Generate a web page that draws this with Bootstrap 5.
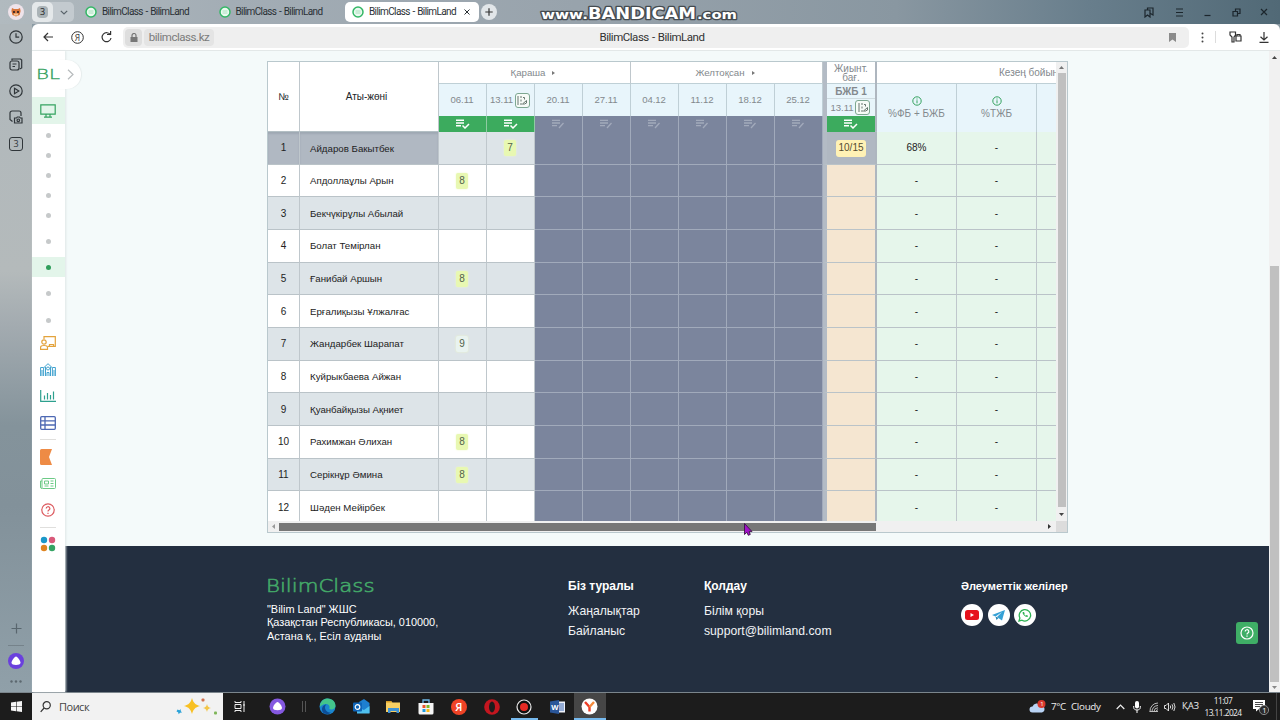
<!DOCTYPE html>
<html lang="kk">

<head>
  <meta charset="UTF-8">
  <meta name="viewport" content="width=device-width, initial-scale=1.0">
  <title>BilimClass - BilimLand</title>
  <link href="https://cdn.jsdelivr.net/npm/bootstrap@5.3.0/dist/css/bootstrap.min.css" rel="stylesheet">
  <style>
    body {
      width: 1280px;
      height: 720px;
      overflow: hidden;
      font-family: "Liberation Sans", Arial, sans-serif;
      font-size: 10px;
      line-height: 1.2;
      color: #222;
      background: #8c9ba4;
    }
    svg { display: block; flex: none; }
    svg.ln { fill: none; stroke: currentColor; stroke-width: 1.2; }
    .ui-font { font-family: "Open Sans", "Noto Sans", sans-serif; }

    /* Browser */
    .tab-strip { height: 24px; background: linear-gradient(90deg, #b1babf 0, #a3adb5 18%, #98a3ac 45%, #8997a1 70%, #687e8c 85%, #516976 100%); }
    .tab-item { height: 20px; color: #2a3035; white-space: nowrap; }
    .tab-txt { font-family: Roboto, sans-serif; font-size: 10px; letter-spacing: -.62px; word-spacing: .8px; }
    .tab-on { background: #fff; border-radius: 5px; width: 134px; }
    .pin-group { background: #c3cacf; border-radius: 5px; height: 20px; width: 42px; }
    .pin-on { width: 21px; height: 20px; background: #e4e8ea; border-radius: 5px; }
    .pin-num { background: #aab3b7; border-radius: 4px; width: 11px; height: 12px; font-size: 9px; }
    .plus-btn { width: 16px; height: 16px; border-radius: 50%; background: #e2e6e9; }
    .rail { width: 32px; height: 669px; color: #30363a; background: linear-gradient(180deg, #b0b8bc 0, #b4babb 37%, #a3abb0 45%, #84939b 60%, #82919a 72%, #90a0a9 100%); }
    .rail-item { height: 26.7px; }
    .rail-box { width: 14px; height: 14px; border: 1.2px solid #30363a; border-radius: 3px; font-size: 9px; }
    .viewer { width: 1248px; }
    .toolbar { height: 27px; background: #fff; border-radius: 6px 6px 0 0; border-bottom: 1px solid #e3e8e8; color: #333; }
    .address { width: 1066px; height: 21px; background: #efefef; border-radius: 5px; }
    .addr-chip { background: #dedede; border-radius: 4px; height: 17px; }
    .addr-host { width: 70px; margin-left: 2px; padding-top: 1px; background: #e4e4e4; color: #7a7a7a; font-family: Roboto, sans-serif; font-size: 11.5px; letter-spacing: -.45px; }
    .addr-title { width: 240px; margin-left: 318px; padding-top: 1px; color: #333; font-family: Roboto, sans-serif; font-size: 11.5px; letter-spacing: -.48px; word-spacing: .8px; }

    /* BilimClass sidebar */
    .side { width: 33px; padding-right: 1px; background: #fff; box-shadow: 1px 0 2px #dfe6e6; z-index: 2; }
    .side-on { background: #e3f5ea; margin-right: -1px; padding-right: 1px; }
    .dotty { width: 5px; height: 5px; border-radius: 50%; background: #c6c9ca; }
    .side-on .dotty { background: #2f9e5b; }
    .side-line { height: 1px; background: #e0dfdd; margin: 0 8px; }
    .bump { position: absolute; left: 26px; top: 9px; width: 23px; height: 29px; background: #fff; border-radius: 0 15px 15px 0; box-shadow: 1px 0 1px #e6ecec; }
    .page-bg { width: 1204px; background: #f4fafa; }
    .scroll-col { width: 11px; background: #f1f1f1; }

    /* Journal */
    .journal { width: 801px; height: 472px; margin: 10px 0 0 202px; border: 1px solid #b9c8cd; background: #f0f0f0; }
    .grid-view { width: 788px; height: 459px; overflow: hidden; background: #fff; }
    .grid-in { width: 869px; }
    .g-head { height: 70px; border-bottom: 1px solid #b3bfc4; color: #83898d; }
    .g-row { height: 32.67px; }
    .cell { border-right: 1px solid #bfc7cc; border-bottom: 1px solid #bac3c8; display: flex; align-items: center; justify-content: center; flex: none; }
    .g-row .cell { padding-top: 1px; }
    .g-head .cell { border-bottom: 0; }
    .c-no { width: 32px; }
    .c-name { width: 139px; }
    .g-row .c-name { justify-content: flex-start; padding-left: 10px; font-size: 9.7px; }
    .day-txt { font-size: 9.6px; letter-spacing: -.1px; padding-right: 1px; }
    .c-day { width: 48px; }
    .g-row .c-day { padding-right: 1px; }
    .c-sum { width: 54px; border-left: 4px solid #b3bbc5; border-right: 2px solid #aeb6bf; background: #f5e6d1; }
    .c-pct { width: 80px; background: #e6f6eb; }
    .g-row:nth-child(even) .c-no, .g-row:nth-child(even) .c-name, .g-row:nth-child(even) .c-day { background: #dde4e8; }
    .g-row:nth-child(2) .c-no, .g-row:nth-child(2) .c-name { background: #b0b8c2; box-shadow: inset 0 2px 2px #9fa8b3; }
    .g-row:nth-child(2) .c-sum { background: #b0b8c2; }
    .g-row .c-day.c-off, .g-head .c-off { background: #7b859d; border-color: #a1aabb; }
    .h-month { height: 22px; border-bottom: 1px solid #bfd0d6; border-right: 1px solid #bfc7cc; background: #fff; }
    .h-sum { padding-top: 2px; line-height: 9px; }
    .h-date { height: 32px; background: #e8f5fb; border-right: 1px solid #bfcfd6; }
    .h-mark { height: 16px; background: #3cab5e; color: #fff; border-right: 1px solid #8fcba2; }
    .h-mark.c-off { color: #a2aabb; }
    .edit-box { width: 15px; height: 15px; border: 1px solid #7da791; border-radius: 3px; background: #f6fbf7; color: #66756e; }
    .mark-chip { background: #e8f8b2; padding: 2px 3px; box-shadow: 0 0 2px #eefac4; color: #52624a; border-radius: 2px; }
    .mark-chip.nine { background: #e9f3f0; }
    .sum-chip { background: #fff2b5; border-radius: 3px; width: 30px; height: 17px; color: #554b30; }
    .v-scroll { width: 11px; height: 459px; background: #f0f0f0; }
    .thumb-v { background: #c0c0c0; }
    .thumb-h { width: 597px; height: 8px; background: #777; }
    .pointer { position: absolute; left: 743px; top: 522px; z-index: 5; }

    /* Footer */
    .site-foot { height: 146px; background: #232f40; color: #fff; padding: 30px 0 0 202px; }
    .foot-h { font-size: 12px; font-weight: 700; height: 24px; }
    .foot-a { font-size: 12.2px; height: 20px; padding-top: .5px; color: #f1f3f5; }
    .foot-addr { font-size: 10.9px; line-height: 13.4px; }
    .soc { width: 22px; height: 22px; border-radius: 50%; background: #fff; }
    .help-btn { position: absolute; right: 11px; bottom: 48px; width: 22px; height: 22px; background: #3fae66; border-radius: 3px; }

    /* Taskbar */
    .taskbar { height: 28px; background: #1c1c1c; border-top: 1px solid #7b858c; color: #eee; }
    .search { width: 191px; background: #f2f2f2; color: #444; font-size: 11px; }
    .app { width: 32.7px; height: 27px; display: flex; align-items: center; justify-content: center; }
    .app-run { box-shadow: inset 0 -2px 0 #76b9ed; width: 27px; margin: 0 2.85px; }
    .app-on { background: #464646; box-shadow: inset 0 -2px 0 #76b9ed; }
    .tray { font-size: 9.8px; }
  </style>
</head>

<body class="d-flex flex-column">

  <!-- Tabs -->
  <div class="tab-strip d-flex align-items-center ui-font">
    <svg class="ms-2" width="16" height="16" viewBox="0 0 16 16"><circle cx="8" cy="8" r="8" fill="#efe3ea"/><path d="M4 4l2 1h4l2-1 .6 3-1 4L8 12.500l-3.600-1.500-1-4z" fill="#d8763c"/><path d="M5 7h2v2H5zM9 7h2v2H9z" fill="#4b2f28"/><path d="M6 9.500h4v2H6z" fill="#f3c89a"/></svg>
    <div class="pin-group d-flex align-items-center" style="margin-left:8px">
      <div class="pin-on d-flex align-items-center justify-content-center"><span class="pin-num d-flex align-items-center justify-content-center">3</span></div>
      <svg class="ln ms-auto me-auto" width="8" height="5" viewBox="0 0 8 5" color="#59636a"><path d="M.8.8L4 4 7.200.8"/></svg>
    </div>
    <div id="tabs" class="d-flex align-items-center"></div>
    <div class="plus-btn d-flex align-items-center justify-content-center" style="margin-left:2px"><svg class="ln" width="8" height="8" viewBox="0 0 8 8" color="#333"><path d="M4 .3v7.400M.3 4h7.400"/></svg></div>
    <svg style="margin-left:42px" width="203" height="22" viewBox="0 0 203 22">
      <g font-family="DejaVu Sans" font-weight="700" fill="#fff" stroke="#444b50" stroke-width="2.600" stroke-linejoin="round" paint-order="stroke">
        <text x="2" y="18" font-size="13" textLength="47" lengthAdjust="spacingAndGlyphs">www.</text>
        <text x="49" y="18" font-size="15" textLength="108" lengthAdjust="spacingAndGlyphs">BANDICAM</text>
        <text x="158" y="18" font-size="13" textLength="40" lengthAdjust="spacingAndGlyphs">.com</text>
      </g>
    </svg>
    <div class="d-flex align-items-center ms-auto" style="gap:19.500px;margin-right:12px;color:#1c262d">
      <svg class="ln" style="margin-right:1px" width="10" height="11" viewBox="0 0 10 11"><path d="M1 3h5v7L3.500 8 1 10zM3.500 3V1H9v7L6.500 6.500"/></svg>
      <svg class="ln" width="9" height="9" viewBox="0 0 9 9"><path d="M1 1h7M1 4.500h7M1 8h7"/></svg>
      <svg class="ln" width="9" height="9" viewBox="0 0 9 9"><path d="M1.500 7.500h6"/></svg>
      <svg class="ln" width="9" height="9" viewBox="0 0 9 9"><path d="M1 3.500h4.500V8H1zM3.500 3.500V1H8v4.500H5.500"/></svg>
      <svg class="ln" width="8" height="8" viewBox="0 0 8 8"><path d="M1 1l6 6M7 1L1 7"/></svg>
    </div>
  </div>

  <div class="d-flex" style="height:668px">
    <!-- Browser rail -->
    <div class="rail d-flex flex-column">
      <div id="railTop"></div>
      <div class="mt-auto d-flex flex-column align-items-center" style="padding-bottom:10px">
        <svg class="ln" width="11" height="11" viewBox="0 0 11 11" color="#59666e"><path d="M5.500.5v10M.5 5.500h10"/></svg>
        <div style="width:16px;height:1px;background:#75828a;margin:11px 0 7px"></div>
        <svg width="16" height="16" viewBox="0 0 16 16"><circle cx="8" cy="8" r="8" fill="#6a40dd"/><path d="M8 3.500c1.500 0 4.500 4.500 4.500 6.300 0 1.700-2 2.200-4.500 2.200s-4.500-.5-4.500-2.200C3.500 8 6.500 3.500 8 3.500z" fill="#fff"/></svg>
        <svg style="margin-top:11px" width="12" height="3" viewBox="0 0 12 3" fill="#5c686f"><circle cx="1.500" cy="1.500" r="1.200"/><circle cx="6" cy="1.500" r="1.200"/><circle cx="10.500" cy="1.500" r="1.200"/></svg>
      </div>
    </div>

    <div class="viewer d-flex flex-column">
      <!-- Toolbar -->
      <div class="toolbar d-flex align-items-center ui-font">
        <svg class="ln" style="margin-left:11px" width="10" height="10" viewBox="0 0 10 10"><path d="M10 5H1M5 1L1 5l4 4"/></svg>
        <svg style="margin-left:18px" width="13" height="13" viewBox="0 0 13 13"><circle cx="6.500" cy="6.500" r="5.800" fill="none" stroke="#333"/><text x="3.700" y="9.500" font-size="8.500" font-family="Open Sans" fill="#333">Я</text></svg>
        <svg class="ln" style="margin-left:17px" width="11" height="12" viewBox="0 0 11 12"><path d="M9.500 4A4.500 4.500 0 1 0 10 7M6 3.500h3.600V0"/></svg>
        <div class="address d-flex align-items-center" style="margin-left:11px">
          <div class="addr-chip d-flex align-items-center justify-content-center" style="width:17px;margin-left:2px"><svg width="8" height="9" viewBox="0 0 8 9"><path d="M.5 4h7v5h-7z" fill="#777"/><path d="M2 4V2.500a2 2 0 0 1 4 0V4" fill="none" stroke="#777" stroke-width="1.200"/></svg></div>
          <div class="addr-chip addr-host d-flex align-items-center justify-content-center">bilimclass.kz</div>
          <div class="addr-title text-center">BilimClass - BilimLand</div>
          <svg class="ms-auto" style="margin-right:13px" width="7" height="9" viewBox="0 0 7 9"><path d="M0 0h7v9L3.500 6.500 0 9z" fill="#8b8b8b"/></svg>
        </div>
        <svg style="margin-left:12px" width="3" height="11" viewBox="0 0 3 11" fill="#444"><circle cx="1.500" cy="1.500" r="1"/><circle cx="1.500" cy="5.500" r="1"/><circle cx="1.500" cy="9.500" r="1"/></svg>
        <div style="width:1px;height:12px;background:#dcdcdc;margin-left:11px"></div>
        <svg class="ln" style="margin-left:13px" width="13" height="12" viewBox="0 0 13 12"><path d="M1 1h5.500v3L5 6v5H3V6L1 4zM7 5h5v5H7zM8 5V3.500h3V5"/></svg>
        <svg class="ln" style="margin-left:17px" width="10" height="11" viewBox="0 0 10 11"><path d="M5 0v8M1.500 4.700L5 8l3.500-3.300M.5 10.400h9"/></svg>
      </div>

      <div class="d-flex flex-grow-1">
        <!-- Site sidebar -->
        <div class="side position-relative">
          <div class="bump d-flex align-items-center"><svg class="ln" style="margin-left:9px" width="7" height="11" viewBox="0 0 7 11" color="#b6babc"><path d="M1 .8l5 4.700-5 4.700"/></svg></div>
          <div id="side" class="position-relative"></div>
        </div>

        <!-- Page -->
        <div class="page-bg d-flex flex-column position-relative">
          <div class="journal">
            <div class="d-flex">
              <div class="grid-view"><div class="grid-in" id="grid"></div></div>
              <div class="v-scroll d-flex flex-column align-items-center">
                <svg style="margin:4px 0" width="5" height="3" viewBox="0 0 5 3"><path d="M0 3l2.500-3L5 3z" fill="#777"/></svg>
                <div class="thumb-v" style="width:8px;height:434px"></div>
                <svg style="margin-top:6px" width="5" height="3" viewBox="0 0 5 3"><path d="M0 0l2.500 3L5 0z" fill="#444"/></svg>
              </div>
            </div>
            <div class="d-flex align-items-center" style="height:11px">
              <svg style="margin:0 5px 0 4px" width="3" height="5" viewBox="0 0 3 5"><path d="M3 0L0 2.500 3 5z" fill="#999"/></svg>
              <div class="thumb-h" style="margin-left:-1px"></div>
              <svg style="margin-left:172px" width="3" height="5" viewBox="0 0 3 5"><path d="M0 0l3 2.500L0 5z" fill="#333"/></svg>
              <div class="ms-auto" style="width:11px;height:11px;background:#dcdcdc"></div>
            </div>
          </div>

          <footer class="site-foot mt-auto d-flex">
            <div style="width:301px">
              <svg width="110" height="20" viewBox="0 0 110 20"><text x="-1" y="15.500" font-family="DejaVu Sans" font-weight="200" font-size="18.500" fill="#43a868" stroke="#43a868" stroke-width=".6" textLength="108.500" lengthAdjust="spacingAndGlyphs">BilimClass</text></svg>
              <div class="foot-addr" style="margin-top:7px">"Bilim Land" ЖШС<br>Қазақстан Республикасы, 010000,<br>Астана қ., Есіл ауданы</div>
            </div>
            <div style="width:136px;padding-top:3px">
              <div class="foot-h">Біз туралы</div>
              <div class="foot-a">Жаңалықтар</div>
              <div class="foot-a">Байланыс</div>
            </div>
            <div style="width:257px;padding-top:3px">
              <div class="foot-h">Қолдау</div>
              <div class="foot-a">Білім қоры</div>
              <div class="foot-a">support@bilimland.com</div>
            </div>
            <div style="padding-top:3px">
              <div class="foot-h" style="font-size:11px;padding-top:1px">Әлеуметтік желілер</div>
              <div class="d-flex" style="gap:4.500px;margin-top:1px">
                <div class="soc d-flex align-items-center justify-content-center"><svg width="14" height="10" viewBox="0 0 14 10"><rect width="14" height="10" rx="2.500" fill="#e6121c"/><path d="M5.500 3l3.500 2-3.500 2z" fill="#fff"/></svg></div>
                <div class="soc d-flex align-items-center justify-content-center"><svg width="13" height="11" viewBox="0 0 13 11"><path d="M13 0L0 5l3.500 1.500L10 2 5 7l5 3.500z" fill="#36a1d6"/><path d="M3.500 6.500L4.500 10l2-2z" fill="#2384b5"/></svg></div>
                <div class="soc d-flex align-items-center justify-content-center"><svg width="14" height="14" viewBox="0 0 14 14"><path d="M1 13l.9-3A5.700 5.700 0 1 1 4 12.200z" fill="none" stroke="#2fb254" stroke-width="1.300"/><path d="M4.800 4c-1 1.500 2.200 5.300 4.700 5l.5-1.200-1.500-.8-.8.7L6.200 6.200l.5-.8L6 4z" fill="#2fb254"/></svg></div>
              </div>
            </div>
          </footer>
          <div class="help-btn d-flex align-items-center justify-content-center"><svg class="ln" width="14" height="14" viewBox="0 0 14 14" color="#fff"><circle cx="7" cy="7" r="6"/><path d="M5.200 5.600a1.800 1.800 0 1 1 2.700 1.500c-.6.400-.9.700-.9 1.400M7 9.500v1.200"/></svg></div>
        </div>

        <!-- Page scrollbar -->
        <div class="scroll-col d-flex flex-column align-items-center">
          <svg style="margin-top:5px" width="5" height="3" viewBox="0 0 5 3"><path d="M0 3l2.500-3L5 3z" fill="#444"/></svg>
          <div class="thumb-v mt-auto" style="width:9px;height:416px"></div>
          <svg style="margin:4px 0 3px" width="5" height="3" viewBox="0 0 5 3"><path d="M0 0l2.500 3L5 0z" fill="#888"/></svg>
        </div>
      </div>
    </div>
  </div>

  <!-- Mouse pointer -->
  <svg class="pointer" width="10" height="15" viewBox="0 0 10 15"><path d="M1.500 1.500v11l2.300-2.200 1.500 3 2-.9-1.300-2.800h3z" fill="#a012c8" stroke="#3b1245" stroke-width=".9"/></svg>

  <!-- Taskbar -->
  <div class="taskbar d-flex align-items-center ui-font">
    <div class="app" style="width:32px"><svg width="11" height="11" viewBox="0 0 11 11" fill="#f4f4f4"><path d="M0 1.500L5 .8v4.400H0zM5.600.7L11 0v5.200H5.600zM0 5.800h5v4.400l-5-.7zM5.600 5.800H11V11l-5.400-.7z"/></svg></div>
    <div class="search d-flex align-items-center h-100">
      <svg class="ln" style="margin-left:8px" width="11" height="12" viewBox="0 0 11 12" color="#333"><circle cx="6.700" cy="4.300" r="3.600"/><path d="M4.100 7L.7 10.800"/></svg>
      <span style="margin-left:8px;letter-spacing:-.5px">Поиск</span>
      <svg style="margin-left:auto;margin-right:5px" width="42" height="20" viewBox="0 0 42 20"><path d="M16 1c1.500 5 3 6.500 8 8-5 1.500-6.500 3-8 8-1.500-5-3-6.500-8-8 5-1.500 6.500-3 8-8z" fill="#f8c022"/><path d="M31 7c.8 2.700 1.300 3.200 4 4-2.700.8-3.200 1.300-4 4-.8-2.700-1.300-3.200-4-4 2.700-.8 3.200-1.300 4-4z" fill="#f3c649"/><path d="M1.500 12.500l1.700.7 1.800-1-.3 1.800 1.300 1.600-2 .2-1.300 1.500-.6-2-1.600-.8z" fill="#2ba2d8"/><rect x="25.500" y="1.500" width="3" height="3" rx="1" fill="#d0714c"/><rect x="38" y="14.500" width="3" height="3" rx="1" fill="#7eb558"/></svg>
    </div>
    <div id="apps" class="d-flex" style="margin-left:1px"></div>
    <div class="tray d-flex align-items-center ms-auto">
      <svg width="17" height="13" viewBox="0 0 17 13"><path d="M3.500 12.500a3 3 0 0 1 0-6 4.500 4.500 0 0 1 8-1 3.600 3.600 0 0 1 1.500 7z" fill="#b9d3f4"/><circle cx="12.500" cy="4" r="4" fill="#d8382d"/><text x="11.200" y="6.300" font-size="6" fill="#fff" font-family="Open Sans">1</text></svg>
      <span style="margin-left:5px;width:20px;letter-spacing:-.4px">7°C</span>
      <span style="width:45px;letter-spacing:-.3px">Cloudy</span>
      <svg class="ln" width="9" height="6" viewBox="0 0 9 6"><path d="M.7 5l3.800-4 3.800 4"/></svg>
      <svg style="margin-left:8px" width="8" height="12" viewBox="0 0 8 12"><rect x="2" width="4" height="7.500" rx="2" fill="#fff"/><path d="M.7 5v1.500C.7 8 2 9 4 9s3.300-1 3.300-2.500V5M4 9v3" fill="none" stroke="#fff"/></svg>
      <svg style="margin-left:8px" width="10" height="10" viewBox="0 0 10 10" fill="none" stroke="#ccc" stroke-width=".9"><path d="M1 9.500A8 8 0 0 1 9 1M3 9.500A6 6 0 0 1 9 3.500M5 9.500a4 4 0 0 1 4-3.700M7 9.500a2 2 0 0 1 2-1.700M.5 9.500h8.500"/></svg>
      <svg class="ln" style="margin-left:5px" width="12" height="10" viewBox="0 0 12 10"><path stroke-width=".9" d="M.5 3.500H2L4.500 1v8L2 6.500H.5zM6.200 3.500q1 1.500 0 3M8 2.300q1.900 2.700 0 5.400M9.800 1q2.500 4 0 8"/></svg>
      <span style="margin-left:6px;width:18px;font-size:9px">ҚАЗ</span>
      <div class="text-center" style="width:40px;margin-left:3px;font-size:8.400px;line-height:12px;letter-spacing:-.55px">11:07<br>13.11.2024</div>
      <svg style="margin:0 6px 0 10px" width="17" height="16" viewBox="0 0 17 16"><path d="M0 1h12v9H6l-3 2.500V10H0z" fill="#fff"/><path d="M2 3.500h8M2 5.500h8M2 7.500h5" stroke="#1c1c1c" stroke-width=".8"/><circle cx="11" cy="11" r="4.600" fill="#2c2c2c" stroke="#888"/><text x="9.200" y="13.800" font-size="7.500" fill="#fff" font-family="Open Sans">1</text></svg>
      <div style="width:1px;height:27px;background:#444;margin-right:3px"></div>
    </div>
  </div>

  <script>
    const students = [
      ["Айдаров Бакытбек", "", "7"], ["Апдоллаұлы Арын", "8", ""], ["Бекчүкірұлы Абылай", "", ""],
      ["Болат Темірлан", "", ""], ["Ғанибай Аршын", "8", ""], ["Ерғалиқызы Ұлжалғас", "", ""],
      ["Жандарбек Шарапат", "9", ""], ["Куйрыкбаева Айжан", "", ""], ["Қуанбайқызы Ақниет", "", ""],
      ["Рахимжан Әлихан", "8", ""], ["Серікнұр Әмина", "8", ""], ["Шәден Мейірбек", "", ""]
    ];
    const days = ["06.11", "13.11", "20.11", "27.11", "04.12", "11.12", "18.12", "25.12"];
    const center = "d-flex align-items-center justify-content-center";

    const listCheck = `<svg style="margin-right:1px" width="15" height="10" viewBox="0 0 15 10" fill="none" stroke="currentColor" stroke-width="1.500"><path d="M1 1.300h8M1 4h8M1 6.700h5M7.500 6.500L10 9l4-4"/></svg>`;
    const listPen = `<svg style="margin-right:1px" width="13" height="10" viewBox="0 0 13 10" fill="none" stroke="currentColor" stroke-width="1.300"><path d="M0 1.300h8M0 4h8M0 6.700h5M7 9l4.500-5"/></svg>`;
    const editBox = `<span class="edit-box ${center}"><svg width="10" height="9" viewBox="0 0 10 9" fill="none" stroke="currentColor"><path d="M1 0v9"/><path d="M4 0v9" stroke-dasharray="2 1.500"/><path d="M6 1.500h1.500v2M5.500 8L9.500 4.500V7l-2 1z"/></svg></span>`;
    const infoIcon = `<svg width="10" height="10" viewBox="0 0 10 10" fill="none" stroke="#35a360"><circle cx="5" cy="5" r="4.200"/><path d="M5 4.300v3M5 2.500v1"/></svg>`;

    function monthHead(name, count, from) {
      const cols = days.slice(from, from + count).map((d, i) => {
        const n = from + i;
        return `<div class="c-day">
          <div class="h-date day-txt ${center}">${d}${n === 1 ? `<span style="width:2px"></span>${editBox}` : ""}</div>
          <div class="h-mark ${center} ${n > 1 ? "c-off" : ""}">${n > 1 ? listPen : listCheck}</div>
        </div>`;
      }).join("");
      return `<div><div class="h-month ${center}" style="font-size:9.700px;padding-right:3px">${name}<svg style="margin-left:7px" width="3" height="4" viewBox="0 0 3 4"><path d="M0 0l3 2-3 2z" fill="#777"/></svg></div><div class="d-flex">${cols}</div></div>`;
    }

    function pctHead(text) {
      return `<div class="${center} flex-column" style="width:80px;height:48px;background:#e8f5fb;border-right:1px solid #bfcfd6;gap:2px">${text ? infoIcon : ""}<span>${text}</span></div>`;
    }

    function renderGrid() {
      let html = `<div class="g-head d-flex">
        <div class="cell c-no text-dark">№</div><div class="cell c-name text-dark" style="padding-right:5px">Аты-жөні</div>
        ${monthHead("Қараша", 4, 0)}${monthHead("Желтоқсан", 4, 4)}
        <div class="c-sum text-center">
          <div class="h-month h-sum border-end-0">Жиынт.<br>бағ.</div>
          <div class="${center} fw-bold" style="height:15px;padding-top:1px;background:#e8f5fb;border-bottom:1px solid #cfdbe0">БЖБ 1</div>
          <div class="${center} day-txt" style="height:17px;background:#e8f5fb">13.11<span style="width:2px"></span>${editBox}</div>
          <div class="h-mark border-end-0 ${center}">${listCheck}</div>
        </div>
        <div><div class="h-month d-flex align-items-center text-nowrap" style="width:240px;padding-left:122px">Кезең бойынша</div>
        <div class="d-flex">${pctHead("%ФБ + БЖБ")}${pctHead("%ТЖБ")}${pctHead("")}</div></div>
      </div>`;
      students.forEach((s, i) => {
        let cells = "";
        days.forEach((d, n) => {
          const mark = n < 2 ? s[n + 1] : "";
          cells += `<div class="cell c-day ${n > 1 ? "c-off" : ""}">${mark ? `<span class="mark-chip ${mark === "9" ? "nine" : ""}">${mark}</span>` : ""}</div>`;
        });
        html += `<div class="g-row d-flex">
          <div class="cell c-no">${i + 1}</div><div class="cell c-name">${s[0]}</div>${cells}
          <div class="cell c-sum">${i === 0 ? `<span class="sum-chip ${center}">10/15</span>` : ""}</div>
          <div class="cell c-pct">${i === 0 ? "68%" : "-"}</div><div class="cell c-pct">-</div><div class="cell c-pct"></div>
        </div>`;
      });
      document.getElementById("grid").innerHTML = html;
    }

    // Browser tabs
    const fav = `<svg width="12" height="12" viewBox="0 0 12 12"><circle cx="6" cy="6" r="5" fill="#eafaf0" stroke="#33b765" stroke-width="1.500"/><path d="M3.500 5h5M3.500 7h5" stroke="#9bd8b0" stroke-width=".8"/></svg>`;
    document.getElementById("tabs").innerHTML = [0, 1, 2].map(i =>
      `<div class="tab-item d-flex align-items-center ${i === 2 ? "tab-on" : ""}" style="width:${[133.5, 132.5, 134][i]}px;margin-left:${[5, 0, 0][i]}px">
        <span style="width:${i === 2 ? 7 : 6}px"></span>${fav}<span class="tab-txt" style="margin-left:5px">BilimClass - BilimLand</span>
        ${i === 2 ? `<svg class="ln ms-auto" style="margin-right:9px" width="6" height="6" viewBox="0 0 6 6"><path stroke-width="1" d="M.5.5l5 5M5.500.5l-5 5"/></svg>` : ""}
      </div>`).join("");

    // Browser rail
    const rail = [
      `<svg class="ln" width="14" height="14" viewBox="0 0 14 14"><circle cx="7" cy="7" r="6.200"/><path d="M7 3.200V7.200h3.200"/></svg>`,
      `<svg class="ln" width="14" height="14" viewBox="0 0 14 14"><rect x="1" y="4" width="9" height="9" rx="2"/><path d="M3 3.500V2h8.500l1.200 1v8l-2 1M3.500 7h4M3.500 9.500h2.500"/></svg>`,
      `<svg class="ln" width="14" height="14" viewBox="0 0 14 14"><circle cx="7" cy="7" r="6.200"/><path d="M5.500 4.300L9.800 7 5.500 9.700z"/></svg>`,
      `<svg class="ln" width="14" height="14" viewBox="0 0 14 14"><path d="M3.500 11.500L1 9.500V3a2 2 0 0 1 2-2h7a2 2 0 0 1 2 2v3M5.500 8h2l.8-1h2.200l.8 1h1.700v5H5.500z"/><circle cx="9.300" cy="10.300" r="1.300"/></svg>`,
      `<span class="rail-box ${center} ui-font">3</span>`
    ];
    document.getElementById("railTop").innerHTML = rail.map(r => `<div class="rail-item ${center}">${r}</div>`).join("");

    // Site sidebar: [height, content, active]
    const dot = `<span class="dotty"></span>`;
    const menu = [
      [46, `<svg width="28" height="16" viewBox="0 0 28 16"><text x="2" y="13" font-family="DejaVu Sans" font-weight="200" font-size="13.500" fill="#2f9e5b" stroke="#2f9e5b" stroke-width=".3" textLength="24" lengthAdjust="spacingAndGlyphs">BL</text></svg>`],
      [27, `<svg width="16" height="14" viewBox="0 0 16 14" fill="none" stroke="#35a360" stroke-width="1.200"><path d="M.8.8h14.400v9.400H.8zM6 10.500v2.500M10 10.500v2.500M4 13.200h8"/></svg>`, 1],
      [22, dot], [19, dot], [20, dot], [20, dot], [20, dot], [32, dot], [20, dot, 1], [32, dot], [22, dot],
      [23, `<svg width="16" height="14" viewBox="0 0 16 14" fill="none" stroke="#e3a33c" stroke-width="1.200"><path d="M4 3V.7h11.300v9.600H8M9.500 10V8.500h4V10"/><circle cx="4" cy="6" r="2.200"/><path d="M.6 13.300v-2C.6 10 2 9.500 4 9.500s3.500.5 3.500 1.800v2z"/></svg>`],
      [31, `<svg width="16" height="13" viewBox="0 0 16 13" fill="none" stroke="#43a3cf"><path d="M.6 13V4.500h3V13M15.400 13V4.500h-3V13M4 4.500L8 .7l4 3.800M5.500 13V4M10.500 13V4M7 13V9.500h2V13M2 7v6M14 7v6"/><circle cx="8" cy="5.500" r="1.500"/></svg>`],
      [21, `<svg width="16" height="12" viewBox="0 0 16 12" fill="none" stroke="#2da08e" stroke-width="1.200"><path d="M.7 0v11.300H16M4.500 5.500V9.500M7.500 3v6.500M10.500 5v4.500M13.500 1.500v8"/></svg>`],
      [33, `<svg width="16" height="14" viewBox="0 0 16 14" fill="none" stroke="#4d68b3" stroke-width="1.300"><rect x=".7" y=".7" width="14.600" height="12.600" rx="1"/><path d="M.7 4.800h14.600M.7 9h14.600M5 .7v12.600"/></svg>`],
      "line",
      [34, `<svg style="margin-right:4px" width="12" height="16" viewBox="0 0 12 16"><path d="M0 1.500Q0 0 1.500 0H12L9 8l3 8H1.500Q0 16 0 14.500z" fill="#ee8b45"/></svg>`],
      [19, `<svg width="16" height="11" viewBox="0 0 16 11" fill="none" stroke="#6cca86"><rect x="2" y=".5" width="13.500" height="10" rx="1"/><path d="M2 3H.5v6q0 1.500 1.500 1.500M4.500 3h4v3h-4zM4.500 8h4M10.500 3h3M10.500 5.500h3M10.500 8h3"/></svg>`],
      [34, `<svg width="14" height="14" viewBox="0 0 14 14" fill="none" stroke="#dc5a5f" stroke-width="1.200"><circle cx="7" cy="7" r="6.200"/><path d="M5.200 5.600a1.800 1.800 0 1 1 2.700 1.500c-.6.400-.9.700-.9 1.400M7 9.700V11"/></svg>`],
      "line",
      [32, `<svg width="16" height="16" viewBox="0 0 16 16"><circle cx="4" cy="4" r="3.200" fill="#1b98c9"/><circle cx="12" cy="4" r="3.200" fill="#d9597a"/><circle cx="4" cy="12" r="3.200" fill="#df8420"/><circle cx="12" cy="12" r="3.200" fill="#34a464"/></svg>`]
    ];
    document.getElementById("side").innerHTML = menu.map(m => m === "line" ? `<div class="side-line"></div>` :
      `<div class="${center} ${m[2] ? "side-on" : ""}" style="height:${m[0]}px">${m[1]}</div>`).join("");

    // Taskbar apps: [icon, class, width]
    const apps = [
      [`<svg class="ln" width="12" height="11" viewBox="0 0 12 11"><path stroke-width="1" d="M1 0v1.500h6V0M1 3.500h6v4H1zM1 11V9.500h6V11M10 0v11M9 4h2"/></svg>`, "", 32],
      [`<svg width="17" height="17" viewBox="0 0 17 17"><circle cx="8.500" cy="8.500" r="8" fill="#8458e0"/><path d="M8.500 4c1.600 0 4.500 4.300 4.500 6 0 1.800-2 2.200-4.500 2.200S4 11.800 4 10c0-1.700 2.900-6 4.500-6z" fill="#fff"/></svg>`, "", 42],
      [`<svg width="8" height="11" viewBox="0 0 8 11"><path d="M2.500 0v11M5.500 0v11" stroke="#555"/></svg>`, "", 12.7],
      [`<svg width="17" height="17" viewBox="0 0 17 17"><circle cx="8.500" cy="8.500" r="8" fill="#1b86cf"/><path d="M1 6.500C2.500 2 6 .5 8.500.5c5 0 8 3.700 8 7 0 2.500-2 4-4 4-2.500 0-2.500-1-2-1.700C11 8 9.500 6 7 6 4 6 1.500 8 1 9z" fill="#43c58b"/><path d="M7.500 6.500c-3 2-1.500 8 4.500 8.200-3 2.500-9 2-9-3.500 0-2.500 2-4.700 4.500-4.700z" fill="#0c4d96"/></svg>`, "", 34],
      [`<svg width="17" height="15" viewBox="0 0 17 15"><path d="M6 3l5-3 5.500 4v10H4z" fill="#1e7fd0"/><path d="M4 8l7 3 5.500-4v7.500H4z" fill="#4fc0ef"/><rect y="3.500" width="9" height="9" rx="1" fill="#0f65b8"/><circle cx="4.500" cy="8" r="2.300" fill="none" stroke="#fff" stroke-width="1.200"/></svg>`],
      [`<svg width="15" height="13" viewBox="0 0 15 13"><path d="M0 1h5l1.500 1.500H14V12H0z" fill="#f7cf63"/><path d="M0 1h5l1 1.500H0z" fill="#d89c26"/><path d="M2 8h11v5h-2.500v-2h-6v2H2z" fill="#3f93d6"/></svg>`],
      [`<svg width="16" height="16" viewBox="0 0 16 16"><path d="M5 4V1h6v3" fill="none" stroke="#6cb7e5" stroke-width="1.300"/><path d="M.5 4h15v10q0 1.500-1.500 1.500H2Q.5 15.500.5 14z" fill="#f5f5f5"/><path d="M4.500 6h3v3h-3z" fill="#e8532b"/><path d="M8.500 6h3v3h-3z" fill="#7cb928"/><path d="M4.500 10h3v3h-3z" fill="#1d9ae0"/><path d="M8.500 10h3v3h-3z" fill="#f7b919"/></svg>`],
      [`<svg width="16" height="16" viewBox="0 0 16 16"><circle cx="8" cy="8" r="8" fill="#ee4326"/><text x="4.300" y="12.200" font-family="Open Sans" font-weight="600" font-size="11" fill="#fff">Я</text></svg>`],
      [`<svg width="16" height="16" viewBox="0 0 16 16"><circle cx="8" cy="8" r="7.800" fill="#c4161f"/><ellipse cx="8" cy="8" rx="3" ry="5.400" fill="#1c1c1c"/></svg>`],
      [`<svg width="16" height="16" viewBox="0 0 16 16"><circle cx="8" cy="8" r="7" fill="#111" stroke="#e8e8e8" stroke-width="1.200"/><circle cx="8" cy="8" r="4" fill="#e62a24"/></svg>`, "app-run", 27],
      [`<svg width="15" height="14" viewBox="0 0 15 14"><path d="M7 1.500h8v11H7z" fill="#eef2fa"/><path d="M9 4h5M9 6h5M9 8h5M9 10h5" stroke="#3b67b1"/><path d="M0 1.500L9 0v14L0 12.500z" fill="#2a5699"/><text x="1.200" y="9.800" font-size="7.500" font-weight="700" font-family="Open Sans" fill="#fff">W</text></svg>`],
      [`<svg width="17" height="17" viewBox="0 0 17 17"><circle cx="8.500" cy="8.500" r="8" fill="#fff"/><path d="M4 4l4.500 5v4.500" fill="none" stroke="#ec3d28" stroke-width="2.400"/><path d="M13 4L8.500 9" stroke="#f58a3c" stroke-width="2.400"/></svg>`, "app-on"]
    ];
    document.getElementById("apps").innerHTML = apps.map(a =>
      `<div class="app ${a[1] || ""}" style="width:${a[2] || 32.7}px">${a[0]}</div>`).join("");

    renderGrid();
  </script>
  <script src="https://cdn.jsdelivr.net/npm/bootstrap@5.3.0/dist/js/bootstrap.bundle.min.js"></script>
</body>

</html>
